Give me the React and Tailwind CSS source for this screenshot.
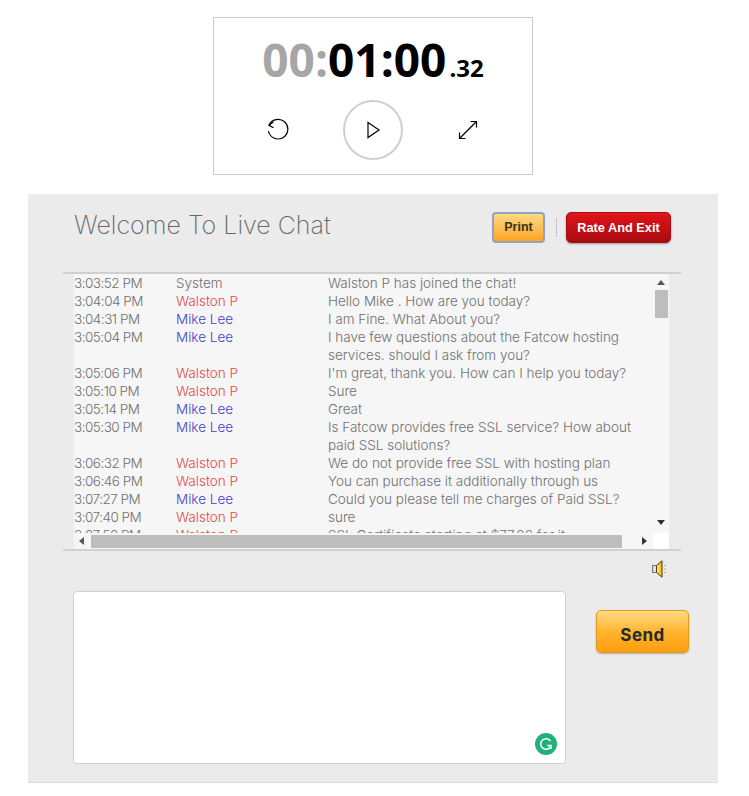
const messages = [
  { time: "3:03:52 PM", from: "System", text: "Walston P has joined the chat!" },
  { time: "3:04:04 PM", from: "Walston P", text: "Hello Mike . How are you today?" },
  { time: "3:04:31 PM", from: "Mike Lee", text: "I am Fine. What About you?" },
  { time: "3:05:04 PM", from: "Mike Lee", text: "I have few questions about the Fatcow hosting services. should I ask from you?" },
  { time: "3:05:06 PM", from: "Walston P", text: "I'm great, thank you. How can I help you today?" },
  { time: "3:05:10 PM", from: "Walston P", text: "Sure" },
  { time: "3:05:14 PM", from: "Mike Lee", text: "Great" },
  { time: "3:05:30 PM", from: "Mike Lee", text: "Is Fatcow provides free SSL service? How about paid SSL solutions?" },
  { time: "3:06:32 PM", from: "Walston P", text: "We do not provide free SSL with hosting plan" },
  { time: "3:06:46 PM", from: "Walston P", text: "You can purchase it additionally through us" },
  { time: "3:07:27 PM", from: "Mike Lee", text: "Could you please tell me charges of Paid SSL?" },
  { time: "3:07:40 PM", from: "Walston P", text: "sure" },
  { time: "3:07:50 PM", from: "Walston P", text: "SSL Certificate starting at $77.00 for it" },
];

const nameColor = {
  System: "text-[#707070]",
  "Walston P": "text-[#e2474b]",
  "Mike Lee": "text-[#4540c8]",
};

function ResetIcon() {
  return (
    <svg width="24" height="24" viewBox="0 0 24 24" fill="none" stroke="black" strokeWidth="1.2">
      <path d="M3 7.3 A9.8 9.8 0 1 1 2.4 13" />
      <path d="M7.5 3.8 L3 7.3 L7.5 9.8" />
    </svg>
  );
}

function PlayIcon() {
  return (
    <svg width="16" height="18" viewBox="0 0 16 18" fill="none" stroke="black" strokeWidth="1.2">
      <path d="M3 1.5 L14 9 L3 16.5 Z" />
    </svg>
  );
}

function ExpandIcon() {
  return (
    <svg width="24" height="24" viewBox="0 0 24 24" fill="none" stroke="black" strokeWidth="1.2">
      <path d="M3.5 20.5 L20.5 3.5" />
      <path d="M14.5 3.5 H20.5 V9.5" />
      <path d="M3.5 14.5 V20.5 H9.5" />
    </svg>
  );
}

function Stopwatch() {
  return (
    <div className="ml-[213px] flex h-[158px] w-[320px] flex-col items-center border border-[#cccccc] bg-white">
      <div className="mt-[18px] flex h-[46px] items-baseline font-['Open_Sans',sans-serif] font-bold leading-none text-black">
        <span className="text-[46px] text-[#a6a6a6]">00:</span>
        <span className="text-[46px]">01:00</span>
        <span className="ml-[3px] text-[24px]">.32</span>
      </div>
      <div className="mt-[18px] flex w-[214px] items-center justify-between">
        <ResetIcon />
        <div className="flex h-[60px] w-[60px] items-center justify-center rounded-full border-2 border-[#cfcfcf]">
          <PlayIcon />
        </div>
        <ExpandIcon />
      </div>
    </div>
  );
}

function ChatLog() {
  return (
    <div className="ml-[35px] w-[618px] border-y-2 border-[#d0d0d0]">
      <div className="ml-[11px] w-[595px] bg-white">
        <div className="flex h-[259px]">
          <div className="w-[579px] overflow-hidden bg-[#f6f6f6] font-['Inter',sans-serif] text-[13.5px] font-light leading-[18px] text-[#707070]">
            {messages.map((m) => (
              <div key={m.time} className="grid grid-cols-[102px_152px_305px]">
                <span className="tracking-[-0.5px]">{m.time}</span>
                <span className={nameColor[m.from]}>{m.from}</span>
                <span>{m.text}</span>
              </div>
            ))}
          </div>
          <div className="flex w-[16px] flex-col items-center bg-[#f6f6f6]">
            <div className="mt-[6px] h-0 w-0 border-x-4 border-b-[5px] border-x-transparent border-b-[#555555]" />
            <div className="mt-[5px] h-[28px] w-[13px] bg-[#bdbdbd]" />
            <div className="mt-auto mb-[8px] h-0 w-0 border-x-4 border-t-[5px] border-x-transparent border-t-[#333333]" />
          </div>
        </div>
        <div className="flex h-[16px]">
          <div className="flex w-[579px] items-center bg-[#f6f6f6]">
            <div className="ml-[5px] h-0 w-0 border-y-4 border-r-[5px] border-y-transparent border-r-[#555555]" />
            <div className="ml-[7px] h-[13px] w-[531px] bg-[#bdbdbd]" />
            <div className="ml-[20px] h-0 w-0 border-y-4 border-l-[5px] border-y-transparent border-l-[#333333]" />
          </div>
        </div>
      </div>
    </div>
  );
}

function SpeakerIcon() {
  return (
    <svg width="16" height="18" viewBox="0 0 16 18" className="ml-[624px] mt-[9px]">
      <defs>
        <linearGradient id="cone" x1="0" y1="0" x2="1" y2="0">
          <stop offset="0" stopColor="#ffe98a" />
          <stop offset="1" stopColor="#f0b400" />
        </linearGradient>
      </defs>
      <rect x="0.5" y="5.5" width="4" height="7" fill="#dcdcdc" stroke="#777777" />
      <path d="M4.5 5.5 L10 0.8 V17.2 L4.5 12.5 Z" fill="url(#cone)" stroke="#4a3c0c" strokeWidth="1" />
      <path d="M12 5.5h1.5M12.5 9h1.5M12 12.5h1.5" stroke="#8a8a8a" strokeWidth="0.8" />
    </svg>
  );
}

function GrammarlyBadge() {
  return (
    <div className="absolute bottom-[8px] right-[8px] flex h-[22px] w-[22px] items-center justify-center rounded-full bg-[#21b07a]">
      <svg width="14" height="14" viewBox="0 0 14 14" fill="none" stroke="white" strokeWidth="1.5">
        <path d="M11.6 4.2 A5.3 5.3 0 1 0 11.8 9.4" />
        <path d="M8.2 8.6 H12 V12" />
      </svg>
    </div>
  );
}

export default function App() {
  return (
    <div className="h-[796px] bg-white pt-[17px]">
      <Stopwatch />
      <div className="ml-[28px] mt-[19px] h-[589px] w-[690px] border-b border-[#dddddd] bg-[#ebebeb] pt-[18px]">
        <div className="flex h-[60px] items-start pl-[46px] pr-[47px]">
          <h1 className="mt-[-2px] font-['Inter',sans-serif] text-[25px] font-extralight leading-[30px] text-[#666666]">
            Welcome To Live Chat
          </h1>
          <button className="ml-auto h-[31px] w-[53px] rounded-[4px] border-2 border-[#8ea4c4] bg-gradient-to-b from-[#ffd980] to-[#ffa41c] font-['Liberation_Sans',sans-serif] text-[12.5px] font-bold text-[#3a3214]">
            Print
          </button>
          <div className="ml-[11px] mr-[9px] mt-[6px] h-[19px] w-px bg-[#c4c4c4]" />
          <button className="h-[31px] w-[105px] rounded-[5px] border border-[#a50d12] bg-gradient-to-b from-[#e2141b] to-[#a90a0f] font-['Liberation_Sans',sans-serif] text-[12.75px] font-bold text-white shadow-[0_1px_2px_rgba(0,0,0,0.35)]">
            Rate And Exit
          </button>
        </div>
        <ChatLog />
        <SpeakerIcon />
        <div className="mt-[13px] flex items-start pl-[45px]">
          <div className="relative h-[173px] w-[493px] rounded-[4px] border border-[#d0d0d0] bg-white">
            <GrammarlyBadge />
          </div>
          <button className="ml-[30px] mt-[19px] h-[43px] w-[93px] rounded-[5px] border border-[#e39a1c] bg-gradient-to-b from-[#ffdb7e] via-[#ffb52e] to-[#ff9d0a] pt-[8px] font-['Inter',sans-serif] text-[17px] font-bold tracking-wide text-[#1d2b33] shadow-[0_1px_2px_rgba(0,0,0,0.25)]">
            Send
          </button>
        </div>
      </div>
    </div>
  );
}
